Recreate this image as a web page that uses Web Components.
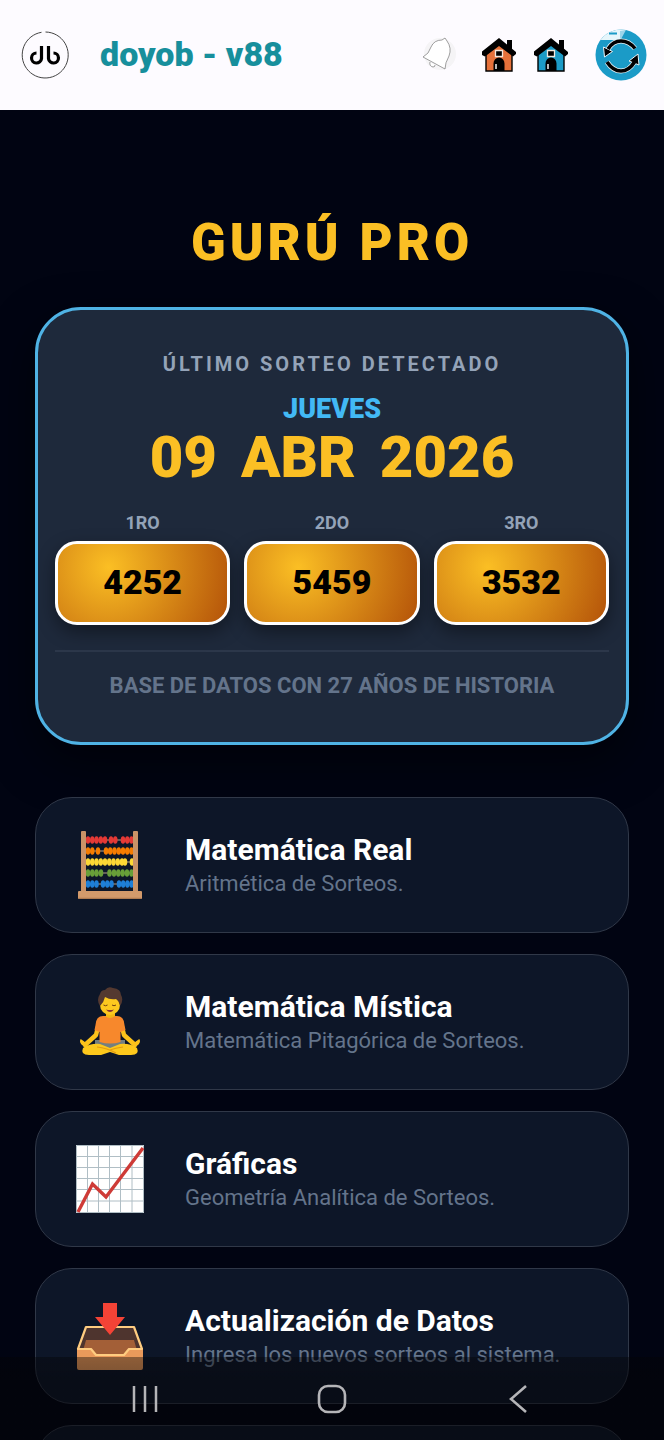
<!DOCTYPE html>
<html lang="es">
<head>
<meta charset="utf-8">
<meta name="viewport" content="width=device-width, initial-scale=1">
<title>doyob - v88</title>
<style>
    html, body {
        margin: 0;
        height: 100%;
        background: #010412;
    }

    body {
        font-family: Roboto, "Liberation Sans", sans-serif;
    }
</style>
</head>
<body>
<guru-app></guru-app>

<script>
function attach(el, html) {
    const template = document.createElement('template');
    template.innerHTML = html;
    el.attachShadow({ mode: 'open' });
    el.shadowRoot.appendChild(template.content.cloneNode(true));
}

/* ---------- icons ---------- */

function beads(y, color, xs) {
    return `<path d="M9 ${y}H61" stroke="#b9a48a" stroke-width="1"/>` +
        xs.map(x => `<ellipse cx="${x}" cy="${y}" rx="2.3" ry="3.8" fill="${color}"/>`).join('');
}

function house(color) {
    return `<svg viewBox="0 0 36 36" width="36" height="36">
        <path d="M26 3h5v11h-5z" fill="#000"/>
        <path d="M5 15 18 5l13 10v19H5z" fill="${color}" stroke="#000" stroke-width="1.4"/>
        <path d="M18 1 1 14.500v3.500l3 1.500L18 9l14 10.500 3-2.500v-2z" fill="#000"/>
        <path d="M14.500 13.500h7v6h-7z" fill="#000" stroke="#f4e9df" stroke-width="1.3"/>
        <path d="M12.500 34v-7.500a5.500 6 0 0 1 11 0V34z" fill="#000"/>
        <path d="M15 27v5" stroke="#e8e8e8" stroke-width="1.600"/>
    </svg>`;
}

const icons = {
    logo: `<svg viewBox="0 0 48 48" width="48" height="48" fill="none">
        <path d="M24.500 1a23 23 0 1 1-4 .3" stroke="#444" stroke-width="1"/>
        <path d="M20.500 15v12.500a5 5 0 1 1-5-5.500" stroke="#000" stroke-width="3.2"/>
        <path d="M27.500 15v12.500a5 5 0 1 0 5-5.500" stroke="#000" stroke-width="3.2"/>
    </svg>`,
    bell: `<svg viewBox="0 0 36 40" width="36" height="40">
        <circle cx="19" cy="19" r="16" fill="#f5f4f6"/>
        <path d="M2 22 Q8 19 10 12 Q13 5 21 5 L24 3 L26 6 Q31 13 28 21 Q24 28 24 34 Z" fill="#fff" stroke="#777" stroke-width=".7"/>
        <path d="M9 27q-1 4 3 5q2 0 2-2" fill="#fff" stroke="#777" stroke-width=".7"/>
    </svg>`,
    houseOrange: house('#e6713a'),
    houseBlue: house('#1c9bc6'),
    refresh: `<svg viewBox="0 0 52 52" width="52" height="52" fill="none">
        <circle cx="26" cy="26" r="25.500" fill="#1b9bc7"/>
        <path d="M5.500 11A25.500 25.500 0 0 1 30 .9L25 11z" fill="#e6f6fb"/>
        <path d="M25 2l6-1-5 9h-1z" fill="#9bd5ea"/>
        <path d="M14 4.500h8" stroke="#1b9bc7" stroke-width="2"/>
        <g stroke="#e7f5fa" stroke-width="5">
            <path d="M40 19.500Q34 12 26 12Q18 12 13 20"/>
            <path d="M12 33Q18 42 26 42Q34 42 39.500 33"/>
        </g>
        <path d="M8.500 18l9 4.500L9.500 28zM43 25l1 11-10-4z" fill="#000" stroke="#e7f5fa" stroke-width="1"/>
        <g stroke="#000" stroke-width="3.600">
            <path d="M40 19.500Q34 12 26 12Q18 12 13 20"/>
            <path d="M12 33Q18 42 26 42Q34 42 39.500 33"/>
        </g>
    </svg>`,
    abacus: `<svg viewBox="0 0 70 70" width="70" height="70">
        ${beads(10, '#e53935', [13, 17.300, 21.500, 25.800, 30, 36, 40.300, 48, 52.300, 56.500])}
        ${beads(21, '#f57c00', [13, 17.300, 23, 31, 35.200, 39.500, 43.800, 48, 52.300, 56.500])}
        ${beads(32, '#fdd835', [13, 17.300, 21.500, 25.800, 30, 34.300, 38.500, 42.800, 47, 50, 57])}
        ${beads(43, '#689f38', [13, 17.300, 21.500, 26, 34.500, 39, 43.300, 47.600, 52, 56.500])}
        ${beads(54, '#1e7fd8', [13, 17.300, 21.500, 28, 32.300, 36.500, 44, 48.200, 52.400, 56.600])}
        <rect x="6" y="1" width="5" height="62" rx="1" fill="#ca9367"/>
        <rect x="58" y="1" width="5" height="62" rx="1" fill="#ca9367"/>
        <rect x="3" y="61" width="64" height="8" rx="1" fill="#d39a6b"/>
        <path d="M4 68.300h62" stroke="#a8744c" stroke-width="1"/>
    </svg>`,
    yoga: `<svg viewBox="0 0 70 70" width="70" height="70">
        <path d="M20 53h30v8H20z" fill="#757f80"/>
        <path d="M31 22h9v10h-9z" fill="#f5b714"/>
        <path d="M23 40 21 48 10 58M47 40l2 8 11 10" fill="none" stroke="#fbc21b" stroke-width="4.500" stroke-linecap="round" stroke-linejoin="round"/>
        <path d="M8 58q-3-3-2-5l7 5M62 58q3-3 2-5l-7 5" fill="#fbc21b" stroke="#fbc21b" stroke-width="1.500"/>
        <path d="M8 61Q16 56 25 57l10 4 10-4q10-1 17 4 3 7-6 7H44l-9-3-9 3H14q-9 0-6-7z" fill="#fdc81c"/>
        <path d="M22 60q10 1 19 6M48 60q-8 1-13 3" fill="none" stroke="#e59b10" stroke-width="1.200"/>
        <path d="M28 29h14q7 0 7.500 9l1 5-5 2v10q-10 3-21 0V45l-5-2 1-5q.5-9 7.500-9z" fill="#f7882c"/>
        <path d="M30 29q5 4 10 0" fill="#f5b714"/>
        <ellipse cx="35" cy="18" rx="10" ry="10" fill="#fdc91f"/>
        <path d="M25 19q-4-6 0-12 1-4 5-4 3-4 8-2 8 1 8 7 3 5-1 11-1-5-4-7-6 1-11-2-1 5-5 9z" fill="#543930"/>
        <path d="M28.500 18q2 1.500 4 0M37 18q2 1.500 4 0" fill="none" stroke="#704010" stroke-width="1"/>
        <path d="M31 22.500q4 1 8 0-4 5-8 0z" fill="#833"/>
    </svg>`,
    chart: `<svg viewBox="0 0 70 70" width="70" height="70">
        <path d="M1 1h68v68H1z" fill="#fff"/>
        <path d="M1 12.500h68M1 23.500h68M1 34.500h68M1 45.500h68M1 57h68M12.500 1v68M23.500 1v68M34.500 1v68M45.500 1v68M57 1v68" stroke="#b0bec5" stroke-width="1"/>
        <path d="M1.500 1.500h67v67h-67z" fill="none" stroke="#b0bec5" stroke-width="1"/>
        <path d="M3 68 17.500 40 31 53 68 4" fill="none" stroke="#ce3b37" stroke-width="3.400"/>
    </svg>`,
    inbox: `<svg viewBox="0 0 70 70" width="70" height="70">
        <path d="M11 27h48l8 22v8H3v-8z" fill="#4e342e"/>
        <path d="M11 39h48l5 18H6z" fill="#a35f37"/>
        <path d="M2 47h14l5 7h28l5-7h14v20q0 2-2 2H4q-2 0-2-2z" fill="#ea9a5b"/>
        <path d="M3 48 11 26h48l8 22H54l-5 6H21l-5-6z" fill="none" stroke="#ffcc80" stroke-width="2.200" stroke-linejoin="round"/>
        <path d="M28 2h14v14h8L35 34 20 16h8z" fill="#f44336"/>
    </svg>`,
    recents: `<svg viewBox="0 0 30 30" width="30" height="30">
        <path d="M4 2v26M15 2v26M26 2v26" stroke="#b5b5b8" stroke-width="2.500"/>
    </svg>`,
    home: `<svg viewBox="0 0 30 30" width="30" height="30">
        <rect x="2" y="2" width="26" height="26" rx="9" fill="none" stroke="#b5b5b8" stroke-width="2.600"/>
    </svg>`,
    back: `<svg viewBox="0 0 30 30" width="30" height="30">
        <path d="M22 2 7 15l15 13" fill="none" stroke="#b5b5b8" stroke-width="2.600"/>
    </svg>`
};

/* ---------- elements ---------- */

class AppIcon extends HTMLElement {
    connectedCallback() {
        if (this.shadowRoot) return;
        attach(this, `
<style>
    :host { display: block; flex: none; }
    svg { display: block; }
</style>
${icons[this.getAttribute('name')]}`);
    }
}

class AppHeader extends HTMLElement {
    constructor() {
        super();
        attach(this, `
<style>
    :host {
        display: block;
        background: #fdfbff;
    }

    header {
        display: flex;
        align-items: center;
        height: 110px;
        padding: 0 17px 0 21px;
    }

    .name {
        flex: 1;
        margin-left: 31px;
        padding-bottom: 2px;
        color: #178f9c;
        font-size: 34px;
        line-height: 40px;
        font-weight: 900;
        white-space: nowrap;
    }

    nav {
        display: flex;
        align-items: center;
        gap: 16px;
    }

    button {
        padding: 0;
        border: 0;
        background: none;
        cursor: pointer;
    }

    .bell { margin-right: 8px; }
    .refresh { margin-left: 10px; }
</style>
<header>
    <app-icon name="logo"></app-icon>
    <span class="name"><slot></slot></span>
    <nav>
        <button class="bell" aria-label="Notificaciones"><app-icon name="bell"></app-icon></button>
        <button aria-label="Inicio"><app-icon name="houseOrange"></app-icon></button>
        <button aria-label="Portada"><app-icon name="houseBlue"></app-icon></button>
        <button class="refresh" aria-label="Recargar"><app-icon name="refresh"></app-icon></button>
    </nav>
</header>`);
    }
}

class PrizeBox extends HTMLElement {
    constructor() {
        super();
        attach(this, `
<style>
    :host {
        display: block;
        text-align: center;
    }

    .label {
        margin-bottom: 8px;
        color: #94a3b8;
        font-size: 18px;
        line-height: 20px;
        font-weight: 700;
    }

    .number {
        padding: 18px 0 20px;
        border: 3px solid #fff;
        border-radius: 22px;
        background: radial-gradient(circle at 30% 30%, #fbbf24, #b45309);
        box-shadow: 0 7px 18px rgba(0, 0, 0, .4);
        color: #000;
        font-size: 34px;
        line-height: 40px;
        font-weight: 900;
    }
</style>
<div class="label"><slot name="label"></slot></div>
<div class="number"><slot></slot></div>`);
    }
}

class DrawCard extends HTMLElement {
    constructor() {
        super();
        attach(this, `
<style>
    :host {
        display: block;
        padding: 40px 17px 42px;
        border: 3px solid #4fb3e5;
        border-radius: 46px;
        background: #1e293b;
        box-shadow: 0 18px 46px rgba(0, 0, 0, .5);
        text-align: center;
        font-weight: 700;
    }

    .caption {
        color: #94a3b8;
        font-size: 20px;
        line-height: 28px;
        letter-spacing: 3px;
    }

    .day {
        margin-top: 15px;
        color: #42b9f5;
        font-size: 27px;
        line-height: 32px;
        font-weight: 900;
    }

    .date {
        display: flex;
        justify-content: center;
        gap: 24px;
        color: #fbbf24;
        font-size: 58px;
        line-height: 64px;
        font-weight: 900;
    }

    .prizes {
        display: grid;
        grid-template-columns: repeat(3, 1fr);
        gap: 14px;
        margin-top: 24px;
    }

    .foot {
        margin-top: 25px;
        padding-top: 20px;
        border-top: 2px solid #2c374a;
        color: #64748b;
        font-size: 22px;
        line-height: 28px;
    }
</style>
<div class="caption">ÚLTIMO SORTEO DETECTADO</div>
<div class="day">JUEVES</div>
<div class="date"><span>09</span><span>ABR</span><span>2026</span></div>
<div class="prizes"><slot></slot></div>
<div class="foot">BASE DE DATOS CON 27 AÑOS DE HISTORIA</div>`);
    }
}

class MenuItem extends HTMLElement {
    connectedCallback() {
        if (this.shadowRoot) return;
        const icon = this.getAttribute('icon');
        attach(this, `
<style>
    :host { display: block; }

    a {
        display: flex;
        align-items: center;
        gap: 40px;
        box-sizing: border-box;
        min-height: 136px;
        padding: 32px 39px;
        border: 1px solid #303848;
        border-radius: 37px;
        background: #0d1628;
        text-decoration: none;
    }

    .title {
        color: #fff;
        font-size: 30px;
        line-height: 38px;
        font-weight: 700;
    }

    .text {
        color: #64748b;
        font-size: 22px;
        line-height: 30px;
    }
</style>
<a href="#">
    ${icon ? `<app-icon name="${icon}"></app-icon>` : ''}
    <div>
        <div class="title"><slot name="title"></slot></div>
        <div class="text"><slot></slot></div>
    </div>
</a>`);
    }
}

class SystemBar extends HTMLElement {
    constructor() {
        super();
        attach(this, `
<style>
    /* lies over the scrolling page */
    :host {
        position: fixed;
        left: 0;
        right: 0;
        bottom: 0;
        display: flex;
        box-sizing: border-box;
        height: 83px;
        padding: 0 52px;
        background: linear-gradient(rgba(5, 4, 6, .4), rgba(5, 4, 6, .5) 30%);
    }

    button {
        flex: 1;
        display: flex;
        align-items: center;
        justify-content: center;
        padding: 0;
        border: 0;
        background: none;
    }
</style>
<button aria-label="Recientes"><app-icon name="recents"></app-icon></button>
<button aria-label="Pantalla de inicio"><app-icon name="home"></app-icon></button>
<button aria-label="Atrás"><app-icon name="back"></app-icon></button>`);
    }
}

class GuruApp extends HTMLElement {
    constructor() {
        super();
        attach(this, `
<style>
    :host {
        display: block;
        height: 100vh;
        overflow: hidden;
    }

    main { padding: 103px 35px 0; }

    h1 {
        margin: 0 0 34px;
        color: #fbbf24;
        font-size: 51px;
        line-height: 60px;
        font-weight: 900;
        letter-spacing: 4px;
        text-align: center;
    }

    .menu {
        display: grid;
        gap: 21px;
        margin-top: 52px;
    }
</style>
<app-header>doyob - v88</app-header>
<main>
    <h1>GURÚ PRO</h1>
    <draw-card>
        <prize-box><span slot="label">1RO</span>4252</prize-box>
        <prize-box><span slot="label">2DO</span>5459</prize-box>
        <prize-box><span slot="label">3RO</span>3532</prize-box>
    </draw-card>
    <div class="menu">
        <menu-item icon="abacus"><span slot="title">Matemática Real</span>Aritmética de Sorteos.</menu-item>
        <menu-item icon="yoga"><span slot="title">Matemática Mística</span>Matemática Pitagórica de Sorteos.</menu-item>
        <menu-item icon="chart"><span slot="title">Gráficas</span>Geometría Analítica de Sorteos.</menu-item>
        <menu-item icon="inbox"><span slot="title">Actualización de Datos</span>Ingresa los nuevos sorteos al sistema.</menu-item>
        <menu-item></menu-item>
    </div>
</main>
<system-bar></system-bar>`);
    }
}

customElements.define('app-icon', AppIcon);
customElements.define('app-header', AppHeader);
customElements.define('prize-box', PrizeBox);
customElements.define('draw-card', DrawCard);
customElements.define('menu-item', MenuItem);
customElements.define('system-bar', SystemBar);
customElements.define('guru-app', GuruApp);
</script>
</body>
</html>
